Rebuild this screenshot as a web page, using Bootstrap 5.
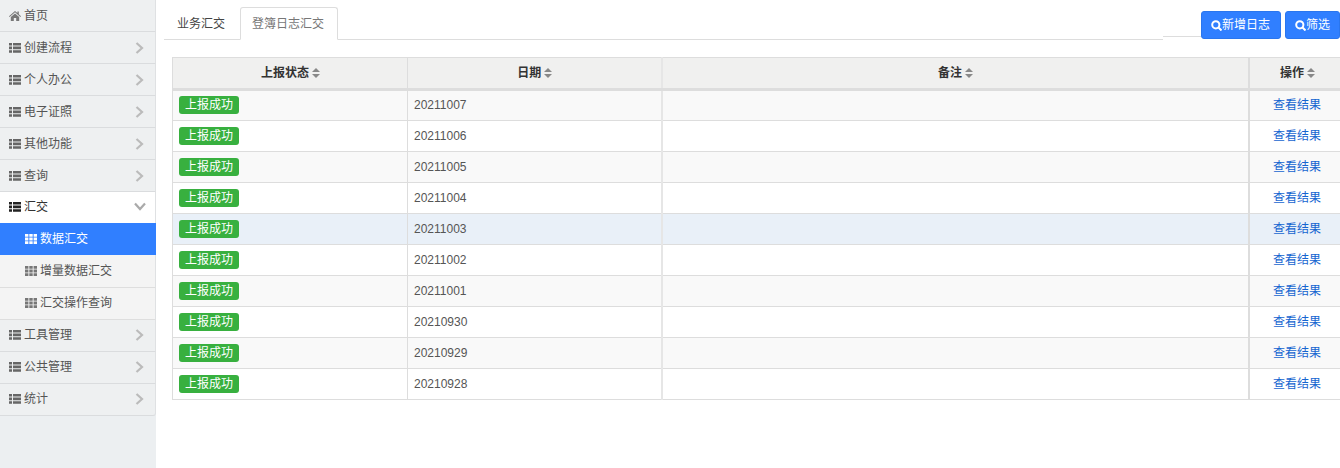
<!DOCTYPE html>
<html lang="zh"><head><meta charset="utf-8">
<title>汇交</title>
<link href="https://cdn.jsdelivr.net/npm/bootstrap@5.3.0/dist/css/bootstrap.min.css" rel="stylesheet">
<style>
html,body{height:468px;overflow:hidden}
body{font-family:"Liberation Sans","Noto Sans CJK SC",sans-serif;font-size:12px;color:#333;background:#fff}
.shell{height:468px}
.side{width:156px;flex:none;background:#eceff1}
.side-item{height:32px;padding:0 11px 0 9px;border-bottom:1px solid #dadcde;border-right:1px solid #dfe1e3;color:#555;font-size:12px;background:#eef0f1}
.side-item.last{border-radius:0 0 3px 0}
.side-item.open{background:#fff;color:#333;border-bottom:0;height:31px;padding-bottom:2px}
.side-sub{height:32px;padding-left:25px;border-bottom:1px solid #dedede;border-right:1px solid #dfe1e3;background:#f4f4f4;color:#555}
.side-sub.on{background:#307fff;color:#fff;border-bottom:0;border-right:0}
.side-sub.tall{height:33px;padding-bottom:1px}
.lift{padding-bottom:2px}
.ic{flex:none;margin-right:3px}
.chev{margin-left:auto}
.main{flex:1;min-width:0}
.topbar{height:57px;padding-left:8px}
.tabsrow{padding-top:7px;width:999px}
.tabsrow .nav-tabs{border-bottom:1px solid #ddd;height:33px}
.tabsrow .nav-link{font-size:12px;padding:0 12px;height:33px;line-height:32px;color:#444;border-radius:3px 3px 0 0;border:1px solid transparent}
.tabsrow .nav-link.first{padding-right:14px}
.tabsrow .nav-link.active{color:#777;border-color:#ddd #ddd #fff;padding:0 13px 0 11px}
.actline{flex:1;height:37px;border-bottom:1px solid #ddd}
.acts{padding-top:11px;gap:4px}
.actbtn{background:#307fff;border:1px solid #2a76ee;color:#fff;font-size:12px;height:28px;padding:0 0 0 9px;border-radius:3px;display:flex;align-items:center;line-height:1}
.w80{width:80px}.w55{width:55px}
.tbl-wrap{padding-left:16px}
table.grid{table-layout:fixed;width:1172px;margin:0;font-size:12px;color:#555;border-collapse:collapse}
table.grid th,table.grid td{border:1px solid #ddd;padding:0 6px;vertical-align:middle;height:31px;box-shadow:none}
table.grid thead th{background:#f0f0ef;text-align:center;font-weight:600;color:#333;border-bottom:3px solid #ddd;height:32px;padding-left:7px}
table.grid tbody tr:nth-child(odd) td{background:#f9f9f9}
table.grid tbody tr:first-child td{padding-bottom:1px}
table.grid tbody tr.hov td{background:#e9f0f8}
table.grid .lastc{border-left-width:2px;border-right:0;text-align:center}
table.grid .c2{border-right:2px solid #e6e6e6}
.state{background:#38b03f;color:#fff;font-weight:400;font-size:12px;border-radius:3px;display:block;width:60px;height:18px;line-height:18px;text-align:center}
.res{color:#1565d0;text-decoration:none}
.sorti{display:inline-block;vertical-align:-1px;margin-left:3px}
</style></head>
<body>
<div class="d-flex shell">
<aside class="side">
  <div class="side-item d-flex align-items-center"><svg class="ic" width="12" height="10" viewBox="0 0 12 10" fill="#777"><path d="M6 0 0 5.200l.6.7L6 1.300l5.400 4.600.6-.7L9.800 3.300V.6H8.400v1.500zM1.800 6v4h3V7h2.400v3h3V6L6 2.400z"/></svg>首页</div>
  <div class="side-item d-flex align-items-center"><svg class="ic" width="12" height="10" fill="#666"><path d="M0 0h3v2.600H0zM4 0h8v2.600H4zM0 3.600h3v2.600H0zM4 3.600h8v2.600H4zM0 7.200h3v2.600H0zM4 7.200h8v2.600H4z"/></svg>创建流程<svg class="chev" width="9" height="12" fill="none" stroke="#bbb" stroke-width="2.200"><path d="M1.500 1 7 6l-5.500 5"/></svg></div>
  <div class="side-item d-flex align-items-center"><svg class="ic" width="12" height="10" fill="#666"><path d="M0 0h3v2.600H0zM4 0h8v2.600H4zM0 3.600h3v2.600H0zM4 3.600h8v2.600H4zM0 7.200h3v2.600H0zM4 7.200h8v2.600H4z"/></svg>个人办公<svg class="chev" width="9" height="12" fill="none" stroke="#bbb" stroke-width="2.200"><path d="M1.500 1 7 6l-5.500 5"/></svg></div>
  <div class="side-item d-flex align-items-center"><svg class="ic" width="12" height="10" fill="#666"><path d="M0 0h3v2.600H0zM4 0h8v2.600H4zM0 3.600h3v2.600H0zM4 3.600h8v2.600H4zM0 7.200h3v2.600H0zM4 7.200h8v2.600H4z"/></svg>电子证照<svg class="chev" width="9" height="12" fill="none" stroke="#bbb" stroke-width="2.200"><path d="M1.500 1 7 6l-5.500 5"/></svg></div>
  <div class="side-item d-flex align-items-center"><svg class="ic" width="12" height="10" fill="#666"><path d="M0 0h3v2.600H0zM4 0h8v2.600H4zM0 3.600h3v2.600H0zM4 3.600h8v2.600H4zM0 7.200h3v2.600H0zM4 7.200h8v2.600H4z"/></svg>其他功能<svg class="chev" width="9" height="12" fill="none" stroke="#bbb" stroke-width="2.200"><path d="M1.500 1 7 6l-5.500 5"/></svg></div>
  <div class="side-item d-flex align-items-center"><svg class="ic" width="12" height="10" fill="#666"><path d="M0 0h3v2.600H0zM4 0h8v2.600H4zM0 3.600h3v2.600H0zM4 3.600h8v2.600H4zM0 7.200h3v2.600H0zM4 7.200h8v2.600H4z"/></svg>查询<svg class="chev" width="9" height="12" fill="none" stroke="#bbb" stroke-width="2.200"><path d="M1.500 1 7 6l-5.500 5"/></svg></div>
  <div class="side-item open d-flex align-items-center"><svg class="ic" width="12" height="10" fill="#222"><path d="M0 0h3v2.600H0zM4 0h8v2.600H4zM0 3.600h3v2.600H0zM4 3.600h8v2.600H4zM0 7.200h3v2.600H0zM4 7.200h8v2.600H4z"/></svg>汇交<svg class="chev" width="12" height="9" fill="none" stroke="#aaa" stroke-width="2.200" style="margin-right:-2px"><path d="M1 1.500 6 7l5-5.500"/></svg></div>
  <div class="side-sub on d-flex align-items-center"><svg class="ic" width="12" height="10" fill="#fff"><path d="M0 0h3.400v2.800H0zM4.300 0h3.400v2.800H4.300zM8.600 0H12v2.800H8.600zM0 3.600h3.400v2.800H0zM4.300 3.600h3.400v2.800H4.300zM8.600 3.600H12v2.800H8.600zM0 7.200h3.400V10H0zM4.300 7.200h3.400V10H4.300zM8.600 7.200H12V10H8.600z"/></svg>数据汇交</div>
  <div class="side-sub tall d-flex align-items-center"><svg class="ic" width="12" height="10" fill="#777"><path d="M0 0h3.400v2.800H0zM4.300 0h3.400v2.800H4.300zM8.600 0H12v2.800H8.600zM0 3.600h3.400v2.800H0zM4.300 3.600h3.400v2.800H4.300zM8.600 3.600H12v2.800H8.600zM0 7.200h3.400V10H0zM4.300 7.200h3.400V10H4.300zM8.600 7.200H12V10H8.600z"/></svg>增量数据汇交</div>
  <div class="side-sub lift d-flex align-items-center"><svg class="ic" width="12" height="10" fill="#777"><path d="M0 0h3.400v2.800H0zM4.300 0h3.400v2.800H4.300zM8.600 0H12v2.800H8.600zM0 3.600h3.400v2.800H0zM4.300 3.600h3.400v2.800H4.300zM8.600 3.600H12v2.800H8.600zM0 7.200h3.400V10H0zM4.300 7.200h3.400V10H4.300zM8.600 7.200H12V10H8.600z"/></svg>汇交操作查询</div>
  <div class="side-item lift d-flex align-items-center"><svg class="ic" width="12" height="10" fill="#666"><path d="M0 0h3v2.600H0zM4 0h8v2.600H4zM0 3.600h3v2.600H0zM4 3.600h8v2.600H4zM0 7.200h3v2.600H0zM4 7.200h8v2.600H4z"/></svg>工具管理<svg class="chev" width="9" height="12" fill="none" stroke="#bbb" stroke-width="2.200"><path d="M1.500 1 7 6l-5.500 5"/></svg></div>
  <div class="side-item lift d-flex align-items-center"><svg class="ic" width="12" height="10" fill="#666"><path d="M0 0h3v2.600H0zM4 0h8v2.600H4zM0 3.600h3v2.600H0zM4 3.600h8v2.600H4zM0 7.200h3v2.600H0zM4 7.200h8v2.600H4z"/></svg>公共管理<svg class="chev" width="9" height="12" fill="none" stroke="#bbb" stroke-width="2.200"><path d="M1.500 1 7 6l-5.500 5"/></svg></div>
  <div class="side-item last lift d-flex align-items-center"><svg class="ic" width="12" height="10" fill="#666"><path d="M0 0h3v2.600H0zM4 0h8v2.600H4zM0 3.600h3v2.600H0zM4 3.600h8v2.600H4zM0 7.200h3v2.600H0zM4 7.200h8v2.600H4z"/></svg>统计<svg class="chev" width="9" height="12" fill="none" stroke="#bbb" stroke-width="2.200"><path d="M1.500 1 7 6l-5.500 5"/></svg></div>
</aside>
<main class="main">
  <div class="topbar d-flex">
    <div class="tabsrow">
      <ul class="nav nav-tabs">
        <li class="nav-item"><a class="nav-link first" href="#">业务汇交</a></li>
        <li class="nav-item"><a class="nav-link active" href="#">登簿日志汇交</a></li>
      </ul>
    </div>
    <div class="actline"></div>
    <div class="acts d-flex">
      <button class="actbtn w80" type="button"><svg width="11" height="11" fill="none" stroke="#fff" stroke-width="2"><circle cx="4.800" cy="4.800" r="3.600"/><path d="m7.500 7.500 3 3"/></svg>新增日志</button>
      <button class="actbtn w55" type="button"><svg width="11" height="11" fill="none" stroke="#fff" stroke-width="2"><circle cx="4.800" cy="4.800" r="3.600"/><path d="m7.500 7.500 3 3"/></svg>筛选</button>
    </div>
  </div>
  <div class="tbl-wrap">
    <table class="table grid">
      <colgroup><col style="width:235px"><col style="width:254px"><col style="width:587px"><col style="width:96px"></colgroup>
      <thead><tr>
        <th>上报状态<svg class="sorti" width="8" height="10" fill="#888"><path d="M4 0 8 4H0zM0 6h8l-4 4z"/></svg></th>
        <th class="c2">日期<svg class="sorti" width="8" height="10" fill="#888"><path d="M4 0 8 4H0zM0 6h8l-4 4z"/></svg></th>
        <th>备注<svg class="sorti" width="8" height="10" fill="#888"><path d="M4 0 8 4H0zM0 6h8l-4 4z"/></svg></th>
        <th class="lastc">操作<svg class="sorti" width="8" height="10" fill="#888"><path d="M4 0 8 4H0zM0 6h8l-4 4z"/></svg></th>
      </tr></thead>
      <tbody>
        <tr><td><span class="state">上报成功</span></td><td class="c2">20211007</td><td></td><td class="lastc"><a class="res" href="#">查看结果</a></td></tr>
        <tr><td><span class="state">上报成功</span></td><td class="c2">20211006</td><td></td><td class="lastc"><a class="res" href="#">查看结果</a></td></tr>
        <tr><td><span class="state">上报成功</span></td><td class="c2">20211005</td><td></td><td class="lastc"><a class="res" href="#">查看结果</a></td></tr>
        <tr><td><span class="state">上报成功</span></td><td class="c2">20211004</td><td></td><td class="lastc"><a class="res" href="#">查看结果</a></td></tr>
        <tr class="hov"><td><span class="state">上报成功</span></td><td class="c2">20211003</td><td></td><td class="lastc"><a class="res" href="#">查看结果</a></td></tr>
        <tr><td><span class="state">上报成功</span></td><td class="c2">20211002</td><td></td><td class="lastc"><a class="res" href="#">查看结果</a></td></tr>
        <tr><td><span class="state">上报成功</span></td><td class="c2">20211001</td><td></td><td class="lastc"><a class="res" href="#">查看结果</a></td></tr>
        <tr><td><span class="state">上报成功</span></td><td class="c2">20210930</td><td></td><td class="lastc"><a class="res" href="#">查看结果</a></td></tr>
        <tr><td><span class="state">上报成功</span></td><td class="c2">20210929</td><td></td><td class="lastc"><a class="res" href="#">查看结果</a></td></tr>
        <tr><td><span class="state">上报成功</span></td><td class="c2">20210928</td><td></td><td class="lastc"><a class="res" href="#">查看结果</a></td></tr>
      </tbody>
    </table>
  </div>
</main>
</div>
</body></html>
